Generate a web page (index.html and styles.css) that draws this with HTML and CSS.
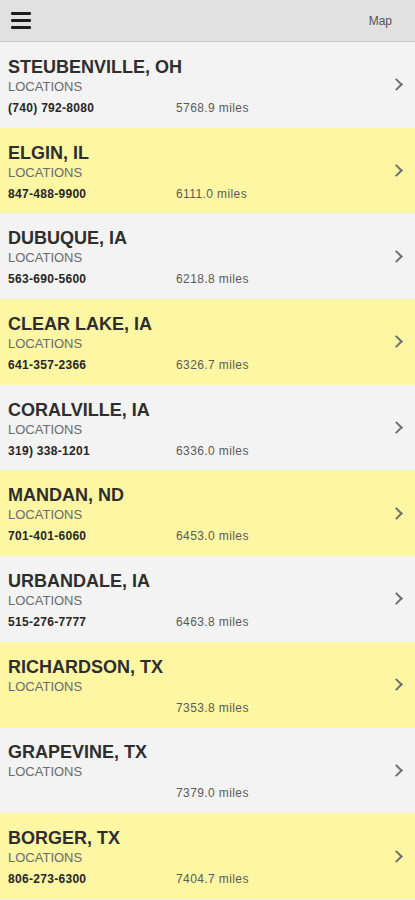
FILE: index.html
```html
<!DOCTYPE html>
<html lang="en">
<head>
    <meta charset="UTF-8">
    <meta name="viewport" content="width=device-width, initial-scale=1.0">
    <title>Locations</title>
    <link rel="stylesheet" href="styles.css">
</head>
<body>
    <header class="topbar">
        <span class="menu-btn"><span></span><span></span><span></span></span>
        <span class="map-link">Map</span>
    </header>

    <ul class="store-list">
        <li class="store">
            <div class="store-info">
                <h2>STEUBENVILLE, OH</h2>
                <p class="store-tag">LOCATIONS</p>
                <div class="store-meta"><span class="phone">(740) 792-8080</span><span class="dist">5768.9 miles</span></div>
            </div>
            <span class="chevron"></span>
        </li>
        <li class="store alt">
            <div class="store-info">
                <h2>ELGIN, IL</h2>
                <p class="store-tag">LOCATIONS</p>
                <div class="store-meta"><span class="phone">847-488-9900</span><span class="dist">6111.0 miles</span></div>
            </div>
            <span class="chevron"></span>
        </li>
        <li class="store">
            <div class="store-info">
                <h2>DUBUQUE, IA</h2>
                <p class="store-tag">LOCATIONS</p>
                <div class="store-meta"><span class="phone">563-690-5600</span><span class="dist">6218.8 miles</span></div>
            </div>
            <span class="chevron"></span>
        </li>
        <li class="store alt">
            <div class="store-info">
                <h2>CLEAR LAKE, IA</h2>
                <p class="store-tag">LOCATIONS</p>
                <div class="store-meta"><span class="phone">641-357-2366</span><span class="dist">6326.7 miles</span></div>
            </div>
            <span class="chevron"></span>
        </li>
        <li class="store">
            <div class="store-info">
                <h2>CORALVILLE, IA</h2>
                <p class="store-tag">LOCATIONS</p>
                <div class="store-meta"><span class="phone">319) 338-1201</span><span class="dist">6336.0 miles</span></div>
            </div>
            <span class="chevron"></span>
        </li>
        <li class="store alt">
            <div class="store-info">
                <h2>MANDAN, ND</h2>
                <p class="store-tag">LOCATIONS</p>
                <div class="store-meta"><span class="phone">701-401-6060</span><span class="dist">6453.0 miles</span></div>
            </div>
            <span class="chevron"></span>
        </li>
        <li class="store">
            <div class="store-info">
                <h2>URBANDALE, IA</h2>
                <p class="store-tag">LOCATIONS</p>
                <div class="store-meta"><span class="phone">515-276-7777</span><span class="dist">6463.8 miles</span></div>
            </div>
            <span class="chevron"></span>
        </li>
        <li class="store alt">
            <div class="store-info">
                <h2>RICHARDSON, TX</h2>
                <p class="store-tag">LOCATIONS</p>
                <div class="store-meta"><span class="phone"></span><span class="dist">7353.8 miles</span></div>
            </div>
            <span class="chevron"></span>
        </li>
        <li class="store">
            <div class="store-info">
                <h2>GRAPEVINE, TX</h2>
                <p class="store-tag">LOCATIONS</p>
                <div class="store-meta"><span class="phone"></span><span class="dist">7379.0 miles</span></div>
            </div>
            <span class="chevron"></span>
        </li>
        <li class="store alt">
            <div class="store-info">
                <h2>BORGER, TX</h2>
                <p class="store-tag">LOCATIONS</p>
                <div class="store-meta"><span class="phone">806-273-6300</span><span class="dist">7404.7 miles</span></div>
            </div>
            <span class="chevron"></span>
        </li>
    </ul>
</body>
</html>
```

FILE: styles.css
```css
body {
    margin: 0;
    font-family: 'Liberation Sans', Arial, sans-serif;
    background: #f2f2f2;
    color: #333;
    overflow: hidden;
}
.topbar {
    height: 41px;
    background: #e1e1e1;
    border-bottom: 1px solid #c8c8c8;
    display: flex;
    align-items: center;
    justify-content: space-between;
    padding: 0 23px 0 11px;
}
.menu-btn {
    width: 20px;
    display: flex;
    flex-direction: column;
    gap: 4px;
}
.menu-btn span {
    height: 3px;
    background: #1c1c1c;
    border-radius: 1px;
}
.map-link {
    font-size: 12px;
    color: #555;
}
.store-list {
    list-style: none;
    margin: 0;
    padding: 0;
}
.store {
    height: 85.7px;
    box-sizing: border-box;
    display: flex;
    align-items: center;
    padding: 0 10px 0 8px;
    background: #f3f3f3;
}
.store.alt {
    background: #fdf6a3;
}
.store-info {
    flex: 1;
    padding-top: 3px;
}
.store h2 {
    margin: 0;
    font-size: 18px;
    font-weight: bold;
    color: #2e2e2e;
    line-height: 21px;
}
.store-tag {
    margin: 1px 0 0;
    font-size: 13px;
    color: #6a6a6a;
    line-height: 16px;
}
.store-meta {
    display: flex;
    margin-top: 6px;
    font-size: 12px;
    letter-spacing: 0.4px;
    line-height: 15px;
    height: 15px;
}
.phone {
    width: 168px;
    color: #262626;
    font-weight: bold;
    letter-spacing: 0.3px;
}
.dist {
    color: #5a5a5a;
}
.chevron {
    width: 7px;
    height: 7px;
    border-right: 2px solid #6f6f6f;
    border-top: 2px solid #6f6f6f;
    transform: rotate(45deg);
    margin-right: 4px;
}
```
